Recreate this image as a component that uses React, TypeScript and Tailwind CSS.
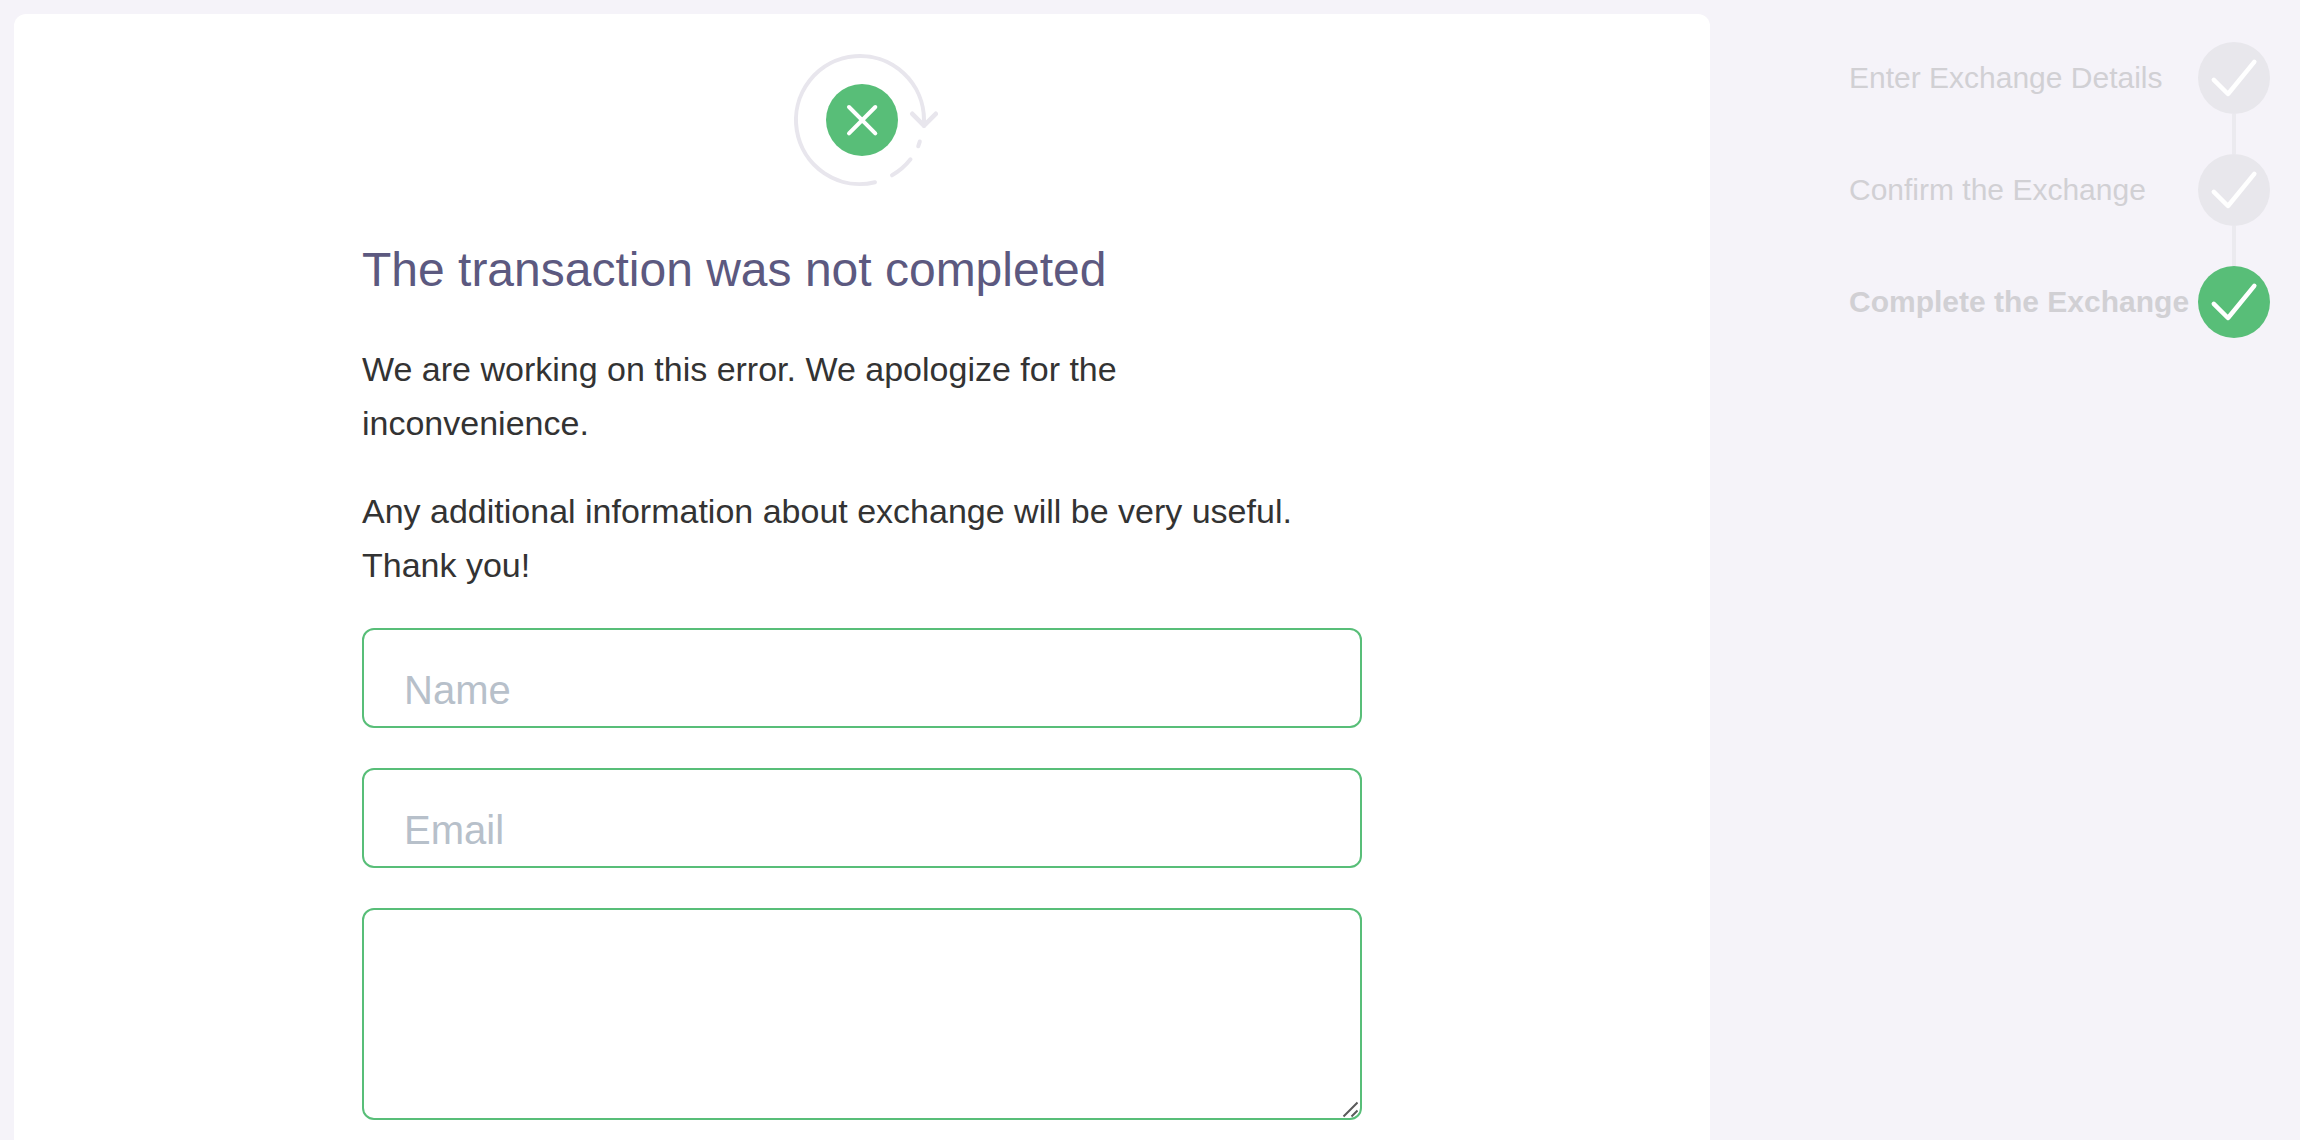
type Step = { label: string; current: boolean };

const steps: Step[] = [
  { label: "Enter Exchange Details", current: false },
  { label: "Confirm the Exchange", current: false },
  { label: "Complete the Exchange", current: true },
];

function FailedIcon() {
  return (
    <svg
      className="mx-auto mb-12 h-36 w-[152px]"
      viewBox="0 0 152 144"
      fill="none"
      strokeWidth="4"
      strokeLinecap="round"
      strokeLinejoin="round"
      aria-hidden="true"
    >
      <g stroke="#e8e6ed">
        <path d="M138 78V72A64 64 0 1 0 89 134.3" />
        <path d="M126.3 65.8L138 77.7L149.8 65.8" strokeWidth="4.6" />
        <path d="M106 127.3A64 64 0 0 0 124.5 111.3" />
        <path d="M132.2 98.3L133.8 93.5" />
      </g>
      <circle cx="76" cy="72" r="36" fill="#58be78" />
      <path d="M63 59L89.3 85.3M89.3 59L63 85.3" stroke="#fff" />
    </svg>
  );
}

function StepMark({ current }: { current: boolean }) {
  return (
    <span
      className={
        current
          ? "block size-[72px] shrink-0 rounded-full bg-[#58be78]"
          : "block size-[72px] shrink-0 rounded-full bg-[#e8e7ec]"
      }
    >
      <svg
        className="size-full"
        viewBox="0 0 72 72"
        fill="none"
        stroke="#fff"
        strokeWidth="4.5"
        strokeLinecap="round"
        strokeLinejoin="round"
        aria-hidden="true"
      >
        <path d="M15.8 37.8L30 52L56.3 19.8" />
      </svg>
    </span>
  );
}

function StepItem({ step, last }: { step: Step; last: boolean }) {
  return (
    <li aria-current={step.current ? "step" : undefined}>
      <div className="flex items-center justify-between">
        <span
          className={
            step.current
              ? "whitespace-nowrap text-[30px] leading-9 font-bold text-[#d1d0d4]"
              : "whitespace-nowrap text-[30px] leading-9 text-[#d1d0d4]"
          }
        >
          {step.label}
        </span>
        <StepMark current={step.current} />
      </div>
      {!last && <div className="mr-[34px] ml-auto h-10 w-1 bg-[#ebeaef]" />}
    </li>
  );
}

const fieldClass =
  "block w-full rounded-[12px] border-2 border-[#58be78] bg-white px-10 pt-6 text-[40px] text-[#333333] outline-none placeholder:text-[#b7c0ca]";

export default function App() {
  return (
    <div className="flex min-h-screen bg-[#f5f3f9] pt-3.5 pl-3.5 font-['Liberation_Sans',Arial,sans-serif]">
      <main className="min-w-0 flex-1 rounded-t-[12px] bg-white px-10 pt-[34px] pb-5">
        <div className="mx-auto max-w-[1000px]">
          <FailedIcon />
          <h1 className="mb-[42px] text-5xl leading-[60px] text-[#5c5980]">
            The transaction was not completed
          </h1>
          <div className="mb-9 flex max-w-[960px] flex-col gap-[34px] text-[34px] leading-[54px] text-[#333333]">
            <p>We are working on this error. We apologize for the inconvenience.</p>
            <p>Any additional information about exchange will be very useful. Thank you!</p>
          </div>
          <form className="flex flex-col gap-10">
            <input
              type="text"
              aria-label="Name"
              placeholder="Name"
              className={`${fieldClass} h-[100px]`}
            />
            <input
              type="email"
              aria-label="Email"
              placeholder="Email"
              className={`${fieldClass} h-[100px]`}
            />
            <div className="relative">
              <textarea
                aria-label="Message"
                className={`${fieldClass} h-[212px] resize-none`}
              />
              <svg
                className="pointer-events-none absolute right-1 bottom-0.5 size-[18px]"
                viewBox="0 0 18 18"
                stroke="#5a5a5a"
                strokeWidth="2"
                aria-hidden="true"
              >
                <path d="M3.5 16.5L17.5 2.5M11.5 16.5L17.5 10.5" />
              </svg>
            </div>
          </form>
        </div>
      </main>
      <aside className="w-[590px] shrink-0 pt-7 pr-[30px] pl-[139px]">
        <ol>
          {steps.map((step, i) => (
            <StepItem key={step.label} step={step} last={i === steps.length - 1} />
          ))}
        </ol>
      </aside>
    </div>
  );
}
